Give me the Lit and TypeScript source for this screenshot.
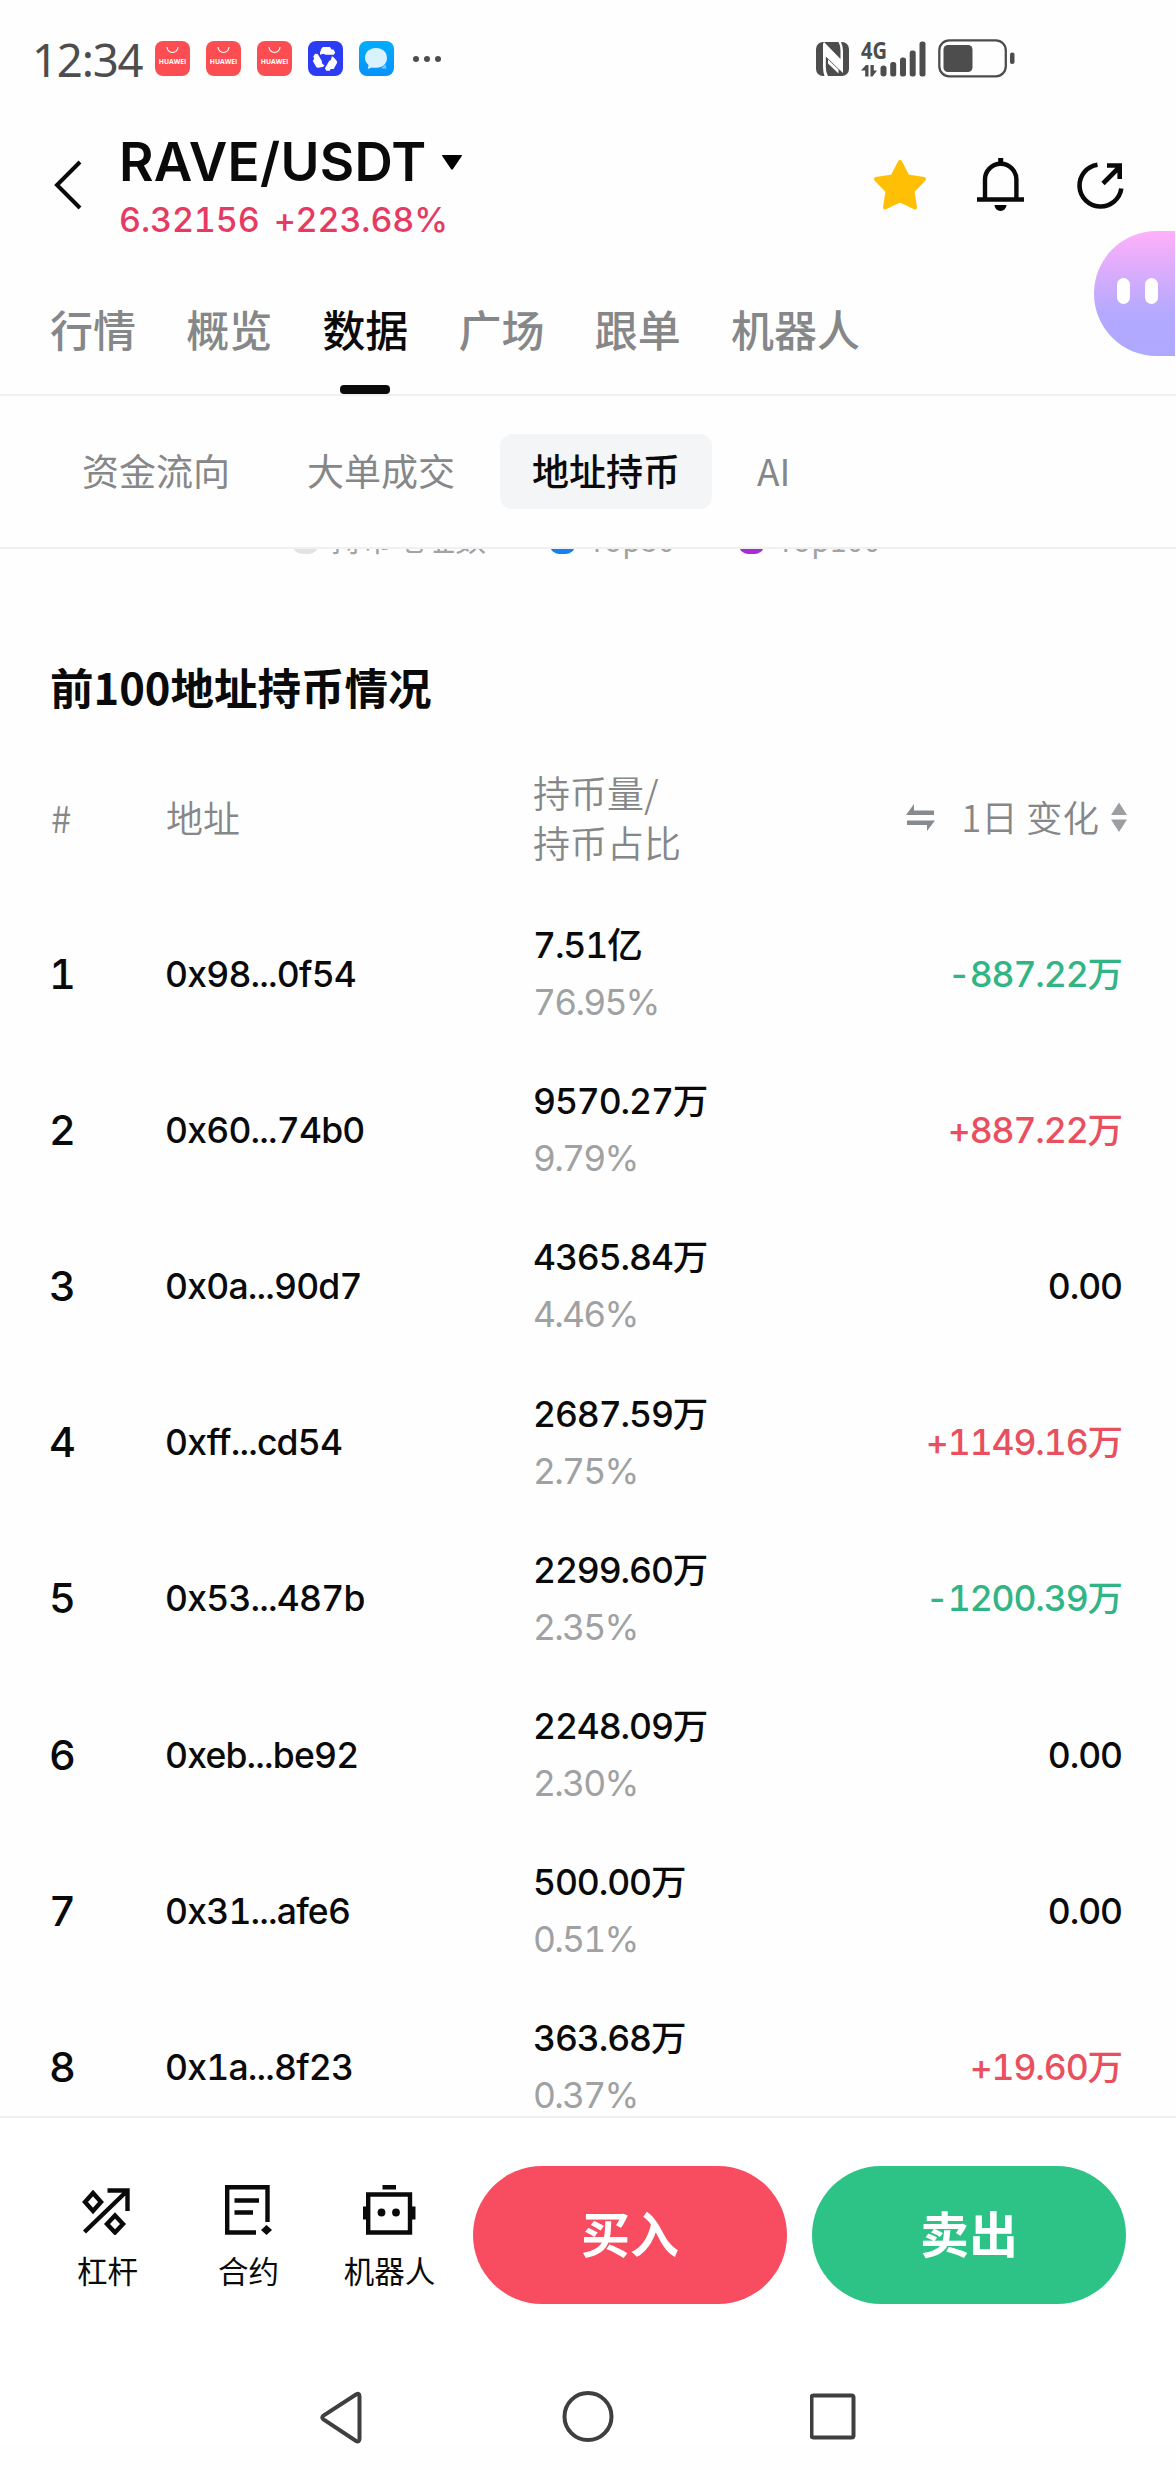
import { LitElement, css, html, svg, TemplateResult } from 'lit';
import { customElement, property } from 'lit/decorators.js';
import { classMap } from 'lit/directives/class-map.js';

interface Holder {
  address: string;
  amount: string;
  share: string;
  change: string;
}

const HOLDERS: Holder[] = [
  { address: '0x98...0f54', amount: '7.51亿', share: '76.95%', change: '-887.22万' },
  { address: '0x60...74b0', amount: '9570.27万', share: '9.79%', change: '+887.22万' },
  { address: '0x0a...90d7', amount: '4365.84万', share: '4.46%', change: '0.00' },
  { address: '0xff...cd54', amount: '2687.59万', share: '2.75%', change: '+1149.16万' },
  { address: '0x53...487b', amount: '2299.60万', share: '2.35%', change: '-1200.39万' },
  { address: '0xeb...be92', amount: '2248.09万', share: '2.30%', change: '0.00' },
  { address: '0x31...afe6', amount: '500.00万', share: '0.51%', change: '0.00' },
  { address: '0x1a...8f23', amount: '363.68万', share: '0.37%', change: '+19.60万' },
];

@customElement('status-bar')
class StatusBar extends LitElement {
  static styles = css`
    :host {
      display: flex;
      align-items: center;
      height: 117px;
      padding-left: 32px;
      box-sizing: border-box;
      color: #4d4d4d;
      font-family: 'Noto Sans', sans-serif;
    }

    .time {
      width: 123px;
      font-size: 45.5px;
      font-weight: 450;
      letter-spacing: -1.2px;
      white-space: nowrap;
    }

    .apps {
      display: flex;
      gap: 16px;
    }

    .more {
      margin-left: 19px;
    }

    .system {
      display: flex;
      align-items: center;
      margin-left: 375px;
    }

    .signal {
      margin-left: 12px;
    }

    .battery {
      margin-left: 12px;
    }

    svg {
      display: block;
    }

    .brand {
      font: 700 6.5px 'Open Sans', sans-serif;
    }

    .network {
      font: 700 24px 'Noto Sans', sans-serif;
    }
  `;

  _gallery() {
    return html`
      <svg width="35" height="35" viewBox="0 0 35 35">
        <rect width="35" height="35" rx="8" fill="#fb4d52" />
        <path d="M12 6a5.5 5.5 0 0 0 11 0" fill="none" stroke="#fff" stroke-width="1.1" />
        <text class="brand" x="3.8" y="22.6" textLength="27.5" lengthAdjust="spacingAndGlyphs" fill="#fff">HUAWEI</text>
      </svg>
    `;
  }

  render() {
    return html`
      <span class="time">12:34</span>
      <div class="apps">
        ${this._gallery()} ${this._gallery()} ${this._gallery()}
        <svg width="35" height="35" viewBox="0 0 35 35">
          <rect width="35" height="35" rx="8" fill="#2c3cf5" />
          ${[0, 120, 240].map(
            (turn) => svg`
              <path transform="rotate(${turn} 17.5 18)" fill="#fff"
                d="M12 11.5 13.5 7.5Q14 6 15.500 6H22L23.500 8.500H25.500L27.200 11.500 25.800 13.800H17.500L15.500 12.800 12 13.800Z" />
            `
          )}
        </svg>
        <svg width="35" height="35" viewBox="0 0 35 35">
          <defs>
            <linearGradient id="sky" x1="0" y1="0" x2="0" y2="1">
              <stop offset="0" stop-color="#00aefc" />
              <stop offset="1" stop-color="#0791fb" />
            </linearGradient>
          </defs>
          <rect width="35" height="35" rx="8" fill="url(#sky)" />
          <path d="M22 27.500 27.500 27.800 26.500 23Z" fill="#6cc5fd" />
          <path d="M17 7c6.500 0 11 4.300 11 10s-4.500 9.800-10.500 9.800c-1.500 0-3.200.2-4.500-.4L8.800 28l.7-4.300C7 21.800 6 19.500 6 17 6 11.300 10.500 7 17 7z" fill="#d9f2ff" />
        </svg>
      </div>
      <svg class="more" width="28" height="6" viewBox="0 0 28 6" fill="#4d4d4d">
        <circle cx="3" cy="3" r="3" />
        <circle cx="14" cy="3" r="3" />
        <circle cx="25" cy="3" r="3" />
      </svg>
      <div class="system">
        <svg width="33" height="34" viewBox="0 0 33 34">
          <rect width="33" height="34" rx="7" fill="#4d4d4d" />
          <path d="M8 0 24.500 17V8.500Q24.500 3.500 22.500 0H25Q27 4 27 9V31L9.800 14.500V25Q9.800 30 12 34H8.500Q7 30 7 25V2Z" fill="#fff" />
          <path d="M12 17.500 22.500 27.500V31.500L12 21.500Z" fill="#fff" />
        </svg>
        <svg class="signal" width="65" height="36" viewBox="0 0 65 36" fill="#4d4d4d">
          <text class="network" x="0" y="17.800" textLength="26" lengthAdjust="spacingAndGlyphs">4G</text>
          <path d="M7.500 35.500H4.200V29.500H0L5 24H7.500ZM9.500 24H12.800V29.500H16L11.500 35.500H9.500Z" />
          <rect x="19.500" y="24.500" width="6" height="11" rx="3" />
          <rect x="29.200" y="21" width="6" height="14.500" rx="2.500" />
          <rect x="39" y="16.500" width="6" height="19" rx="2.500" />
          <rect x="48.700" y="9.500" width="6" height="26" rx="2.500" />
          <rect x="58.500" y="0.500" width="6" height="35" rx="2.500" />
        </svg>
        <svg class="battery" width="77" height="39" viewBox="0 0 77 39">
          <rect x="1.300" y="1.300" width="66.500" height="36" rx="10" fill="none" stroke="#4d4d4d" stroke-width="2.300" />
          <rect x="5.500" y="6" width="29" height="27" rx="4.500" fill="#4d4d4d" />
          <rect x="72" y="13.500" width="4.500" height="11.500" rx="2" fill="#4d4d4d" />
        </svg>
      </div>
    `;
  }
}

@customElement('pair-header')
class PairHeader extends LitElement {
  static styles = css`
    :host {
      display: flex;
      align-items: center;
      height: 137px;
      padding: 0 51px 0 54px;
      box-sizing: border-box;
      font-family: Inter, sans-serif;
    }

    svg {
      display: block;
    }

    .back {
      margin-bottom: 2px;
    }

    .pair {
      margin-left: 37px;
    }

    .name {
      display: flex;
      align-items: center;
      gap: 14px;
      height: 63px;
      padding-top: 3px;
      font-size: 53px;
      font-weight: 600;
      letter-spacing: 0.3px;
      line-height: 63px;
      color: #0a0a0a;
    }

    .price {
      display: flex;
      gap: 14px;
      height: 50px;
      line-height: 51px;
      font-size: 34px;
      font-weight: 500;
      font-feature-settings: 'tnum';
      letter-spacing: -0.1px;
      color: #e63a62;
    }

    .actions {
      display: flex;
      align-items: center;
      gap: 50px;
      margin: 0 0 2px auto;
    }

    .bell {
      margin-right: 2px;
    }
  `;

  render() {
    return html`
      <svg class="back" width="28" height="50" viewBox="0 0 28 50">
        <path d="M26 2 3 25 26 48" fill="none" stroke="#0a0a0a" stroke-width="4" />
      </svg>
      <div class="pair">
        <div class="name">
          RAVE/USDT
          <svg width="22" height="15" viewBox="0 0 22 15"><path d="M1.500 0h19q1 0 .3 1L12 14q-1 1.300-2 0L1.200 1Q.5 0 1.500 0Z" /></svg>
        </div>
        <div class="price"><span>6.32156</span><span>+223.68%</span></div>
      </div>
      <div class="actions">
        <svg width="54" height="52" viewBox="0 0 54 52">
          <path d="M27 3 34.500 17.500 51 20 39.500 32 42 48.500 27 41.500 12 48.500 14.500 32 3 20 19.500 17.500Z"
            fill="#ffbf05" stroke="#ffbf05" stroke-width="4" stroke-linejoin="round" />
        </svg>
        <svg class="bell" width="47" height="54" viewBox="0 0 47 54">
          <path d="M8 41V21.500a15.700 15.700 0 0 1 31.400 0V41M0 41.500H47" fill="none" stroke="#0a0a0a" stroke-width="4.400" />
          <path d="M21.200 0h5v5h-5zM17.500 47h12a6 6 0 0 1-12 0z" />
        </svg>
        <svg width="49" height="52" viewBox="0 0 49 52">
          <path d="M21.500 5.700A21 21 0 1 0 45.300 29.500" fill="none" stroke="#0a0a0a" stroke-width="4.600" />
          <path d="M27 24.500 43.500 8M31 6.500H43.700V20" fill="none" stroke="#0a0a0a" stroke-width="4.600" />
        </svg>
      </div>
    `;
  }
}

@customElement('holder-row')
class HolderRow extends LitElement {
  static styles = css`
    :host {
      display: grid;
      grid-template-columns: 116px 368px 1fr auto;
      align-items: center;
      height: 156.200px;
      padding: 0 54px 0 49px;
      font-family: Inter, 'Noto Sans CJK SC', sans-serif;
      font-feature-settings: 'tnum';
      font-size: 35.500px;
      font-weight: 500;
      letter-spacing: -1.1px;
      line-height: 57px;
      color: #0a0a0a;
    }

    .rank {
      font-size: 41.500px;
    }

    .address {
      letter-spacing: -0.8px;
    }

    .amount,
    .share {
      height: 57px;
    }

    .share {
      font-weight: 400;
      letter-spacing: -1.8px;
      color: #a0a1a2;
    }

    .change {
      height: 57px;
      text-align: right;
    }

    .up {
      color: #e8505f;
    }

    .down {
      color: #32b585;
    }
  `;

  @property({ type: Number }) rank = 0;
  @property({ attribute: false }) holder!: Holder;

  render() {
    const { address, amount, share, change } = this.holder;
    return html`
      <span class="rank">${this.rank}</span>
      <span class="address">${address}</span>
      <div>
        <div class="amount">${amount}</div>
        <div class="share">${share}</div>
      </div>
      <span class=${classMap({ change: true, up: change.startsWith('+'), down: change.startsWith('-') })}>${change}</span>
    `;
  }
}

@customElement('trade-bar')
class TradeBar extends LitElement {
  static styles = css`
    :host {
      display: flex;
      align-items: flex-start;
      height: 216px;
      padding: 48px 50px 0 37px;
      box-sizing: border-box;
      border-top: 2px solid #eeeeef;
      font-family: 'Noto Sans CJK SC', sans-serif;
      background: #fff;
    }

    .tool {
      display: flex;
      flex-direction: column;
      align-items: center;
      gap: 13px;
      width: 141px;
      padding-top: 17px;
      font-size: 30.500px;
      line-height: 44px;
      color: #0a0a0a;
    }

    .trade {
      width: 314px;
      height: 138px;
      border-radius: 69px;
      font-size: 49px;
      font-weight: 700;
      line-height: 131px;
      text-align: center;
      color: #fff;
    }

    .buy {
      margin-left: 13px;
      background: #f84c60;
    }

    .sell {
      margin-left: 25px;
      background: #2dc387;
    }

    svg {
      display: block;
    }
  `;

  _tool(label: string, icon: TemplateResult) {
    return html`
      <div class="tool">
        <svg width="54" height="52" viewBox="0 0 54 52" fill="none" stroke="#0a0a0a" stroke-width="4.400">${icon}</svg>
        ${label}
      </div>
    `;
  }

  render() {
    return html`
      ${this._tool(
        '杠杆',
        svg`
          <path d="M3.500 49 46 8M26.500 7.500H46.500V28" />
          <path d="M12 10 20 19 12 28 4 19ZM34 32.500 42 41 34 49.500 26 41Z" />
        `
      )}
      ${this._tool(
        '合约',
        svg`
          <path d="M45.500 39V4.200H5.200V49.500H34M12.500 17.500H37M12.500 29.500H31" />
          <path d="M44.500 42 50 47 44.500 52 39 47Z" fill="#0a0a0a" stroke="none" />
        `
      )}
      ${this._tool(
        '机器人',
        svg`
          <path d="M5.200 11.500H47V49.500H5.200ZM19.500 4.200H33" />
          <path d="M0 23.500H5V36.500H0ZM47 23.500H52.500V36.500H47Z" fill="#0a0a0a" stroke="none" />
          <circle cx="18.500" cy="29.500" r="3.900" fill="#0a0a0a" stroke="none" />
          <circle cx="33" cy="29.500" r="3.900" fill="#0a0a0a" stroke="none" />
        `
      )}
      <div class="trade buy">买入</div>
      <div class="trade sell">卖出</div>
    `;
  }
}

@customElement('app-root')
class AppRoot extends LitElement {
  static styles = css`
    :host {
      position: relative;
      display: flex;
      flex-direction: column;
      width: 1176px;
      height: 2480px;
      overflow: hidden;
      background: #fefefe;
      font-family: 'Noto Sans CJK SC', sans-serif;
      color: #0a0a0a;
    }

    .tabs {
      display: flex;
      gap: 50.200px;
      height: 140px;
      padding: 0 50px;
      border-bottom: 2px solid #f0f0f1;
      font-size: 43px;
      font-weight: 500;
      line-height: 149px;
      color: #868788;
    }

    .tab {
      position: relative;
    }

    .tab.active {
      color: #0a0a0a;
    }

    .tab.active::after {
      content: '';
      position: absolute;
      bottom: 0;
      left: 50%;
      width: 50px;
      height: 9px;
      margin-left: -25px;
      border-radius: 4px;
      background: #0a0a0a;
    }

    .subtabs {
      display: flex;
      align-items: center;
      gap: 13px;
      height: 151px;
      padding: 0 50px;
      border-bottom: 2px solid #f0f0f1;
      font-size: 37px;
      color: #868788;
    }

    .subtab {
      padding: 0 32px;
      height: 75px;
      line-height: 72px;
      border-radius: 12px;
    }

    .subtab.active {
      font-weight: 500;
      color: #0a0a0a;
      background: #f3f5f6;
    }

    .content {
      height: 1567px;
      overflow: hidden;
    }

    /* Legend of the chart that has scrolled under the tabs. */
    .legend {
      display: flex;
      align-items: center;
      height: 46px;
      margin-top: -34px;
      padding-left: 293px;
      font-size: 31px;
      line-height: 46px;
      color: #a3a3a4;
    }

    .swatch {
      width: 25px;
      height: 25px;
      margin: 6px 13px 0 64px;
      border-radius: 9px;
    }

    .addresses {
      margin-left: 0;
      background: #e3e3e4;
    }

    .top50 {
      background: #1482ea;
    }

    .top100 {
      background: #a92bd6;
    }

    .latin {
      padding-top: 2px;
      font-size: 30px;
      letter-spacing: 0.2px;
    }

    h2 {
      margin: 94px 0 0 50px;
      font-size: 43.500px;
      font-weight: 700;
      line-height: 64px;
    }

    .columns {
      display: grid;
      grid-template-columns: 115px 367px 1fr auto;
      align-items: center;
      height: 100px;
      margin: 48px 0 29px;
      padding: 0 48px 0 51px;
      font-size: 37px;
      font-weight: 350;
      line-height: 50px;
      color: #868788;
    }

    .sort {
      display: flex;
      align-items: center;
      font-size: 36.500px;
    }

    .sort span {
      margin: 0 11px 0 26px;
    }

    .assistant {
      position: absolute;
      top: 231px;
      right: 1px;
      display: flex;
      gap: 15px;
      width: 81px;
      height: 125px;
      padding: 47px 0 0 23px;
      box-sizing: border-box;
      border-radius: 62.500px 0 0 62.500px;
      background: linear-gradient(176deg, #aea8ff, #b5a9ff 35%, #d3acfc 62%, #ffb0fa);
      background: linear-gradient(to bottom, #ffb0fa, #d3acfc 38%, #b5a9ff 65%, #aea8ff);
    }

    .eye {
      width: 13px;
      height: 26px;
      border-radius: 6.500px;
      background: #fff;
    }

    .nav {
      display: flex;
      justify-content: center;
      gap: 196px;
      padding-top: 57px;
      background: #fff;
    }

    svg {
      display: block;
    }
  `;

  _tabs = ['行情', '概览', '数据', '广场', '跟单', '机器人'];
  _subtabs = ['资金流向', '大单成交', '地址持币', 'AI'];

  render() {
    return html`
      <status-bar></status-bar>
      <pair-header></pair-header>
      <div class="tabs">
        ${this._tabs.map((tab) => html`<span class=${classMap({ tab: true, active: tab === '数据' })}>${tab}</span>`)}
      </div>
      <div class="subtabs">
        ${this._subtabs.map((tab) => html`<span class=${classMap({ subtab: true, active: tab === '地址持币' })}>${tab}</span>`)}
      </div>
      <div class="content">
        <div class="legend">
          <i class="swatch addresses"></i>持币地址数
          <i class="swatch top50"></i><span class="latin">Top50</span>
          <i class="swatch top100"></i><span class="latin">Top100</span>
        </div>
        <h2>前100地址持币情况</h2>
        <div class="columns">
          <span>#</span>
          <span>地址</span>
          <span>持币量/<br />持币占比</span>
          <div class="sort">
            <svg width="29" height="28" viewBox="0 0 29 28" fill="#868b90">
              <path d="M0 12 8 1V7.500H28V12H0ZM1 17.500H29L21 28V22H1Z" />
            </svg>
            <span>1日 变化</span>
            <svg width="18" height="30" viewBox="0 0 18 30" fill="#9b9fa2">
              <path d="M1 13 9 0.500 17 13ZM1 17.500H17L9 30Z" />
            </svg>
          </div>
        </div>
        ${HOLDERS.map((holder, i) => html`<holder-row .rank=${i + 1} .holder=${holder}></holder-row>`)}
      </div>
      <trade-bar></trade-bar>
      <div class="nav">
        <svg width="51" height="56" viewBox="0 0 51 56" fill="none" stroke="#3f3f3f" stroke-width="4">
          <path d="M44.500 7.500Q44.500 3.500 41 5.500L8.500 26.500Q6 28.500 8.500 30.500L41 52Q44.500 53.500 44.500 49.500Z" />
        </svg>
        <svg width="52" height="56" viewBox="0 0 52 56" fill="none" stroke="#3f3f3f" stroke-width="4">
          <circle cx="26" cy="27.500" r="23.500" />
        </svg>
        <svg width="51" height="56" viewBox="0 0 51 56" fill="none" stroke="#3f3f3f" stroke-width="4">
          <rect x="1.500" y="6.500" width="42" height="42" rx="2" />
        </svg>
      </div>
      <div class="assistant"><i class="eye"></i><i class="eye"></i></div>
    `;
  }
}
